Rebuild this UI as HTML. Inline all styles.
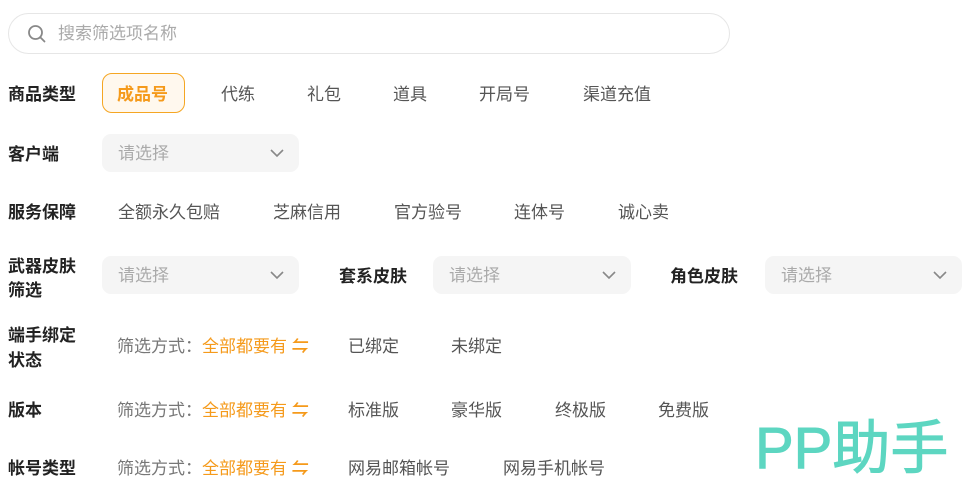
<!DOCTYPE html>
<html><head><meta charset="utf-8"><style>
body{margin:0;width:978px;height:495px;background:#fff;position:relative;overflow:hidden;font-family:"Liberation Sans","Noto Sans CJK SC",sans-serif;font-size:17px;color:#555}
.a{position:absolute;white-space:nowrap;line-height:20px;margin-top:2px}
.l{font-weight:bold;color:#222}
.o{color:#f59a1b}
.g{color:#777}
.sel{position:absolute;background:#f5f5f5;border-radius:9px;height:38px}
.sel span{position:absolute;left:16px;top:10px;color:#aaa;line-height:20px}
.sel svg{position:absolute;right:14px;top:13px}
</style></head><body>
<div style="position:absolute;left:8px;top:13px;width:720px;height:39px;border:1px solid #e6e6e6;border-radius:21px"></div>
<svg style="position:absolute;left:27px;top:24px" width="20" height="20" viewBox="0 0 20 20"><circle cx="8.5" cy="8.5" r="6.5" fill="none" stroke="#888" stroke-width="1.8"/><path d="M13.5 13.5L17.5 17.5" stroke="#888" stroke-width="1.8" stroke-linecap="round"/></svg>
<div class="a" style="left:58px;top:22px;color:#aaa">搜索筛选项名称</div>

<div class="a l" style="left:8px;top:83px">商品类型</div>
<div style="position:absolute;left:102px;top:73px;width:81px;height:38px;border:1px solid #f5a623;border-radius:10px;background:#fff8ee"></div>
<div class="a o" style="left:117px;top:83px;font-weight:bold">成品号</div>
<div class="a" style="left:221px;top:83px">代练</div>
<div class="a" style="left:307px;top:83px">礼包</div>
<div class="a" style="left:393px;top:83px">道具</div>
<div class="a" style="left:479px;top:83px">开局号</div>
<div class="a" style="left:583px;top:83px">渠道充值</div>

<div class="a l" style="left:8px;top:143px">客户端</div>
<div class="sel" style="left:102px;top:134px;width:197px"><span>请选择</span><svg width="16" height="12" viewBox="0 0 16 12"><path d="M2 3l6 6 6-6" fill="none" stroke="#888" stroke-width="1.6"/></svg></div>

<div class="a l" style="left:8px;top:201px">服务保障</div>
<div class="a" style="left:118px;top:201px">全额永久包赔</div>
<div class="a" style="left:273px;top:201px">芝麻信用</div>
<div class="a" style="left:394px;top:201px">官方验号</div>
<div class="a" style="left:514px;top:201px">连体号</div>
<div class="a" style="left:618px;top:201px">诚心卖</div>

<div class="a l" style="left:8px;top:253px;line-height:24px">武器皮肤<br>筛选</div>
<div class="sel" style="left:102px;top:256px;width:197px"><span>请选择</span><svg width="16" height="12" viewBox="0 0 16 12"><path d="M2 3l6 6 6-6" fill="none" stroke="#888" stroke-width="1.6"/></svg></div>
<div class="a l" style="left:339px;top:265px">套系皮肤</div>
<div class="sel" style="left:433px;top:256px;width:198px"><span>请选择</span><svg width="16" height="12" viewBox="0 0 16 12"><path d="M2 3l6 6 6-6" fill="none" stroke="#888" stroke-width="1.6"/></svg></div>
<div class="a l" style="left:670px;top:265px">角色皮肤</div>
<div class="sel" style="left:765px;top:256px;width:197px"><span>请选择</span><svg width="16" height="12" viewBox="0 0 16 12"><path d="M2 3l6 6 6-6" fill="none" stroke="#888" stroke-width="1.6"/></svg></div>

<div class="a l" style="left:8px;top:321px;line-height:25px">端手绑定<br>状态</div>
<div class="a g" style="left:117px;top:335px">筛选方式：<span class="o">全部都要有 <b>⇋</b></span></div>
<div class="a" style="left:348px;top:335px">已绑定</div>
<div class="a" style="left:451px;top:335px">未绑定</div>

<div class="a l" style="left:8px;top:399px">版本</div>
<div class="a g" style="left:117px;top:399px">筛选方式：<span class="o">全部都要有 <b>⇋</b></span></div>
<div class="a" style="left:348px;top:399px">标准版</div>
<div class="a" style="left:451px;top:399px">豪华版</div>
<div class="a" style="left:555px;top:399px">终极版</div>
<div class="a" style="left:658px;top:399px">免费版</div>

<div class="a l" style="left:8px;top:457px">帐号类型</div>
<div class="a g" style="left:117px;top:457px">筛选方式：<span class="o">全部都要有 <b>⇋</b></span></div>
<div class="a" style="left:348px;top:457px">网易邮箱帐号</div>
<div class="a" style="left:503px;top:457px">网易手机帐号</div>

<div style="position:absolute;left:755px;top:416px;white-space:nowrap;font-size:58px;line-height:66px;color:#5dd6c1;font-weight:normal;-webkit-text-stroke:1px #5dd6c1">PP助手</div>
</body></html>
